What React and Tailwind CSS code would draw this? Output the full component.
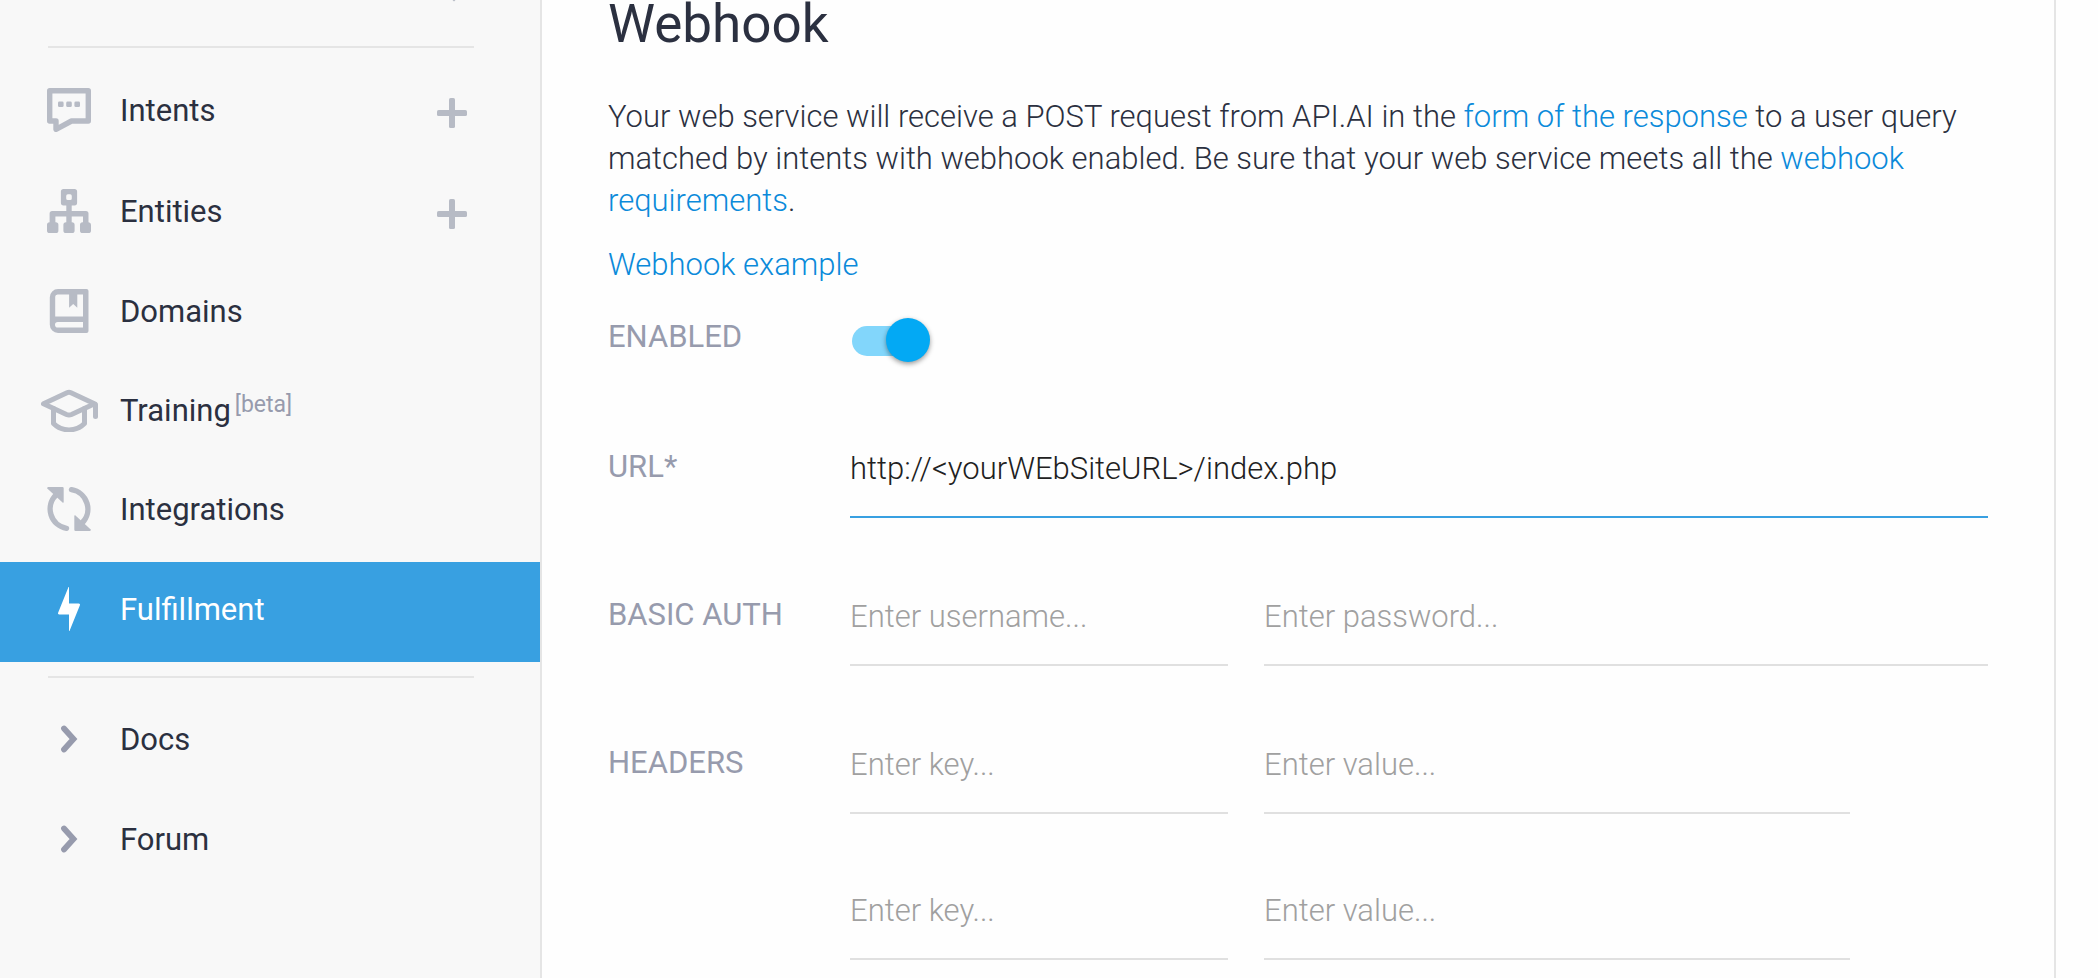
import React from "react";

const IconIntents = () => (
  <svg viewBox="0 0 44 44" className="size-11" fill="none" stroke="currentColor" strokeWidth="5.4" strokeLinejoin="round">
    <path d="M2.7 2.7H41.3V33H24.5L9 41.3V33H2.7Z" />
    <g fill="currentColor" stroke="none">
      <rect x="11" y="13.5" width="5.6" height="5.6" rx="1.4" />
      <rect x="19.2" y="13.5" width="5.6" height="5.6" rx="1.4" />
      <rect x="27.4" y="13.5" width="5.6" height="5.6" rx="1.4" />
    </g>
  </svg>
);

const IconEntities = () => (
  <svg viewBox="0 0 44 44" className="size-11" fill="currentColor">
    <path
      fillRule="evenodd"
      d="M16.5 0h11a2.6 2.6 0 0 1 2.6 2.6v11.2a2.6 2.6 0 0 1-2.6 2.6h-2.8V22h14.2a2.6 2.6 0 0 1 2.6 2.6V33.2a2.6 2.6 0 0 1 2.5 2.6v5.6a2.6 2.6 0 0 1-2.6 2.6h-5.8a2.6 2.6 0 0 1-2.6-2.6v-5.6a2.6 2.6 0 0 1 2.6-2.6h.4V27.5H24.7v5.7h.3a2.6 2.6 0 0 1 2.6 2.6v5.6a2.6 2.6 0 0 1-2.6 2.6h-6a2.6 2.6 0 0 1-2.6-2.6v-5.6a2.6 2.6 0 0 1 2.6-2.6h.3V27.5H8.4v5.7h.4a2.6 2.6 0 0 1 2.6 2.6v5.6a2.6 2.6 0 0 1-2.6 2.6H2.6A2.6 2.6 0 0 1 0 41.4v-5.6a2.6 2.6 0 0 1 2.6-2.6V24.6A2.6 2.6 0 0 1 5.2 22H19.3V16.4h-2.8a2.6 2.6 0 0 1-2.6-2.6V2.6A2.6 2.6 0 0 1 16.5 0ZM20.8 5.3a1.6 1.6 0 0 0-1.6 1.6v2.6a1.6 1.6 0 0 0 1.6 1.6h2.4a1.6 1.6 0 0 0 1.6-1.6V6.9a1.6 1.6 0 0 0-1.6-1.6Z"
    />
  </svg>
);

const IconDomains = () => (
  <svg viewBox="0 0 44 44" className="size-11" fill="currentColor">
    <path
      fillRule="evenodd"
      d="M11 0H39.5a2 2 0 0 1 2 2V42a2 2 0 0 1-2 2H11a8.2 8.2 0 0 1-8.2-8.2V8.2A8.2 8.2 0 0 1 11 0ZM10.5 5.4a2.4 2.4 0 0 0-2.3 2.4V27.6H36V5.4H30.3V18.8L26.2 15 22.1 18.8V5.4ZM10.8 33a2.8 2.8 0 0 0 0 5.6H36V33Z"
    />
  </svg>
);

const IconTraining = () => (
  <svg viewBox="0 0 58 44" className="h-11 w-[58px]" fill="none" stroke="currentColor" strokeWidth="5" strokeLinejoin="round" strokeLinecap="round">
    <path d="M3.5 15.8L27 4.8Q29 3.9 31 4.8L54.5 15.8 31.5 26.500Q29 27.500 26.500 26.500Z" />
    <path d="M13.5 20.5V35.5C22 44 36 44 44.5 35.5V20.5" />
    <path d="M55.5 16.5V28.5" />
  </svg>
);

const IconIntegrations = () => (
  <svg viewBox="0 0 44 44" className="size-11" fill="none" stroke="currentColor" strokeWidth="5.4" strokeLinecap="round">
    <path d="M19.5 41.3A19.6 19.6 0 0 1 9 8" />
    <path d="M24.5 2.7A19.6 19.6 0 0 1 35 36" />
    <path d="M0.8 0H15.5a1.2 1.2 0 0 1 1.2 1.2V15.4L15.8 15.8 0 1.2Z" fill="currentColor" stroke="none" />
    <path d="M43.2 44H28.5a1.2 1.2 0 0 1-1.2-1.2V28.6L28.2 28.2 44 42.8Z" fill="currentColor" stroke="none" />
  </svg>
);

const IconFulfillment = () => (
  <svg viewBox="0 0 44 44" className="size-11" fill="currentColor">
    <path d="M22 0V16.4H31.7a1.3 1.3 0 0 1 1.2 1.8L22.5 44H22V27.6H12.3a1.3 1.3 0 0 1-1.2-1.8L21.5 0Z" />
  </svg>
);

const IconChevron = () => (
  <svg viewBox="0 0 44 44" className="size-11" fill="none" stroke="currentColor" strokeWidth="5.8" strokeLinecap="round">
    <path d="M17 11.5L26.5 22 17 32.5" />
  </svg>
);

const IconPlus = () => (
  <svg viewBox="0 0 30 30" className="size-[30px]" fill="currentColor">
    <rect x="12" y="0" width="6" height="30" rx="1.6" />
    <rect x="0" y="12" width="30" height="6" rx="1.6" />
  </svg>
);

function NavItem({ icon, label, note, add, active, muted, height = "h-[100px]" }) {
  return (
    <li className={`flex items-center pr-[73px] ${height} ${active ? "bg-[#38a0e1] text-white" : "text-[#2b3040]"}`}>
      <a href="#" aria-current={active ? "page" : undefined} className="flex flex-1 items-center gap-2.5 pb-1.5 pl-9">
        <span className={`flex w-[66px] justify-center ${active ? "text-white" : muted ? "text-[#979bad]" : "text-[#b7bbc5]"}`}>{icon}</span>
        <span className="flex items-start pl-2 pt-0.5 text-[31px] leading-[38px]">
          {label}
          {note && <span className="pl-1 text-[23px] leading-[26px] text-[#979bad]">{note}</span>}
        </span>
      </a>
      {add && (
        <button type="button" aria-label={`Create ${label}`} className="text-[#b7bbc5]">
          <IconPlus />
        </button>
      )}
    </li>
  );
}

const Divider = () => <hr className="ml-12 mr-[66px] border-t-2 border-[#e5e5e5]" />;

function Field({ id, label, className, focused, ...rest }) {
  return (
    <input
      id={id}
      aria-label={label}
      className={`h-[72px] min-w-0 border-b-2 bg-transparent pb-[26px] pl-0 text-[31px] font-light text-[#212121] outline-none placeholder:text-[#a0a0a0] ${focused ? "border-[#38a0e1]" : "border-[#e0e0e0]"} ${className}`}
      {...rest}
    />
  );
}

const labelClass = "w-[242px] shrink-0 text-[31px] leading-[42px] text-[#979bad]";
const linkClass = "text-[#0b8ada]";

export default function App() {
  return (
    <div className="flex min-h-screen bg-[#fefefe] font-[Roboto,sans-serif] text-[#2b3040]">
      <aside className="w-[542px] shrink-0 border-r-2 border-[#e5e5e5] bg-[#f8f8f8]">
        <div className="flex h-[46px] items-start justify-end pr-[74px]">
          <svg viewBox="0 0 24 2" className="h-0.5 w-6" fill="none" stroke="#b7bbc5" strokeWidth="5">
            <path d="M0 -14L12 -2 24 -14" />
          </svg>
        </div>
        <Divider />
        <nav className="pt-3.5">
          <ul>
            <NavItem icon={<IconIntents />} label="Intents" add height="h-[101px]" />
            <NavItem icon={<IconEntities />} label="Entities" add height="h-[101px]" />
            <NavItem icon={<IconDomains />} label="Domains" />
            <NavItem icon={<IconTraining />} label="Training" note="[beta]" height="h-[98px]" />
            <NavItem icon={<IconIntegrations />} label="Integrations" />
            <NavItem icon={<IconFulfillment />} label="Fulfillment" active />
          </ul>
          <div className="py-3.5">
            <Divider />
          </div>
          <ul>
            <NavItem icon={<IconChevron />} label="Docs" muted />
            <NavItem icon={<IconChevron />} label="Forum" muted />
          </ul>
        </nav>
      </aside>

      <main className="mr-[42px] min-w-0 flex-1 border-r-2 border-[#e5e5e5] px-[66px]">
        <h1 className="text-[53px] leading-[48px]">Webhook</h1>
        <p className="pt-12 text-[31px] font-light leading-[42px]">
          Your web service will receive a POST request from API.AI in the{" "}
          <a href="#" className={linkClass}>form of the response</a> to a user query matched by intents with webhook enabled. Be
          sure that your web service meets all the <a href="#" className={linkClass}>webhook requirements</a>.
        </p>
        <p className="pt-[22px] text-[31px] font-light leading-[42px]">
          <a href="#" className={linkClass}>Webhook example</a>
        </p>

        <form>
          <div className="flex items-start pt-[30px]">
            <label htmlFor="enabled" className={labelClass}>ENABLED</label>
            <span className="relative ml-0.5 mt-0.5 flex h-[46px] w-[78px] items-center">
              <input id="enabled" type="checkbox" role="switch" defaultChecked className="h-[30px] w-[72px] appearance-none rounded-full bg-[#82d6fb]" />
              <span className="pointer-events-none absolute right-0 top-0 size-11 rounded-full bg-[#03a9f4] shadow-[0_2px_5px_rgba(0,0,0,0.4)]" />
            </span>
          </div>

          <div className="flex items-start pt-[82px]">
            <label htmlFor="url" className={labelClass}>URL*</label>
            <Field id="url" className="flex-1" focused defaultValue="http://<yourWEbSiteURL>/index.php" />
          </div>

          <div className="flex items-start pt-[76px]">
            <label htmlFor="username" className={labelClass}>BASIC AUTH</label>
            <div className="flex flex-1 gap-9">
              <Field id="username" className="w-[378px]" placeholder="Enter username..." />
              <Field type="password" label="Password" className="flex-1" placeholder="Enter password..." />
            </div>
          </div>

          <div className="flex items-start pt-[76px]">
            <label htmlFor="key-1" className={labelClass}>HEADERS</label>
            <div className="flex flex-1 gap-9 pr-[138px]">
              <Field id="key-1" className="w-[378px]" placeholder="Enter key..." />
              <Field label="Header 1 value" className="flex-1" placeholder="Enter value..." />
            </div>
          </div>
          <div className="flex gap-9 pl-[242px] pr-[138px] pt-[74px]">
            <Field label="Header 2 key" className="w-[378px]" placeholder="Enter key..." />
            <Field label="Header 2 value" className="flex-1" placeholder="Enter value..." />
          </div>
        </form>
      </main>
    </div>
  );
}
